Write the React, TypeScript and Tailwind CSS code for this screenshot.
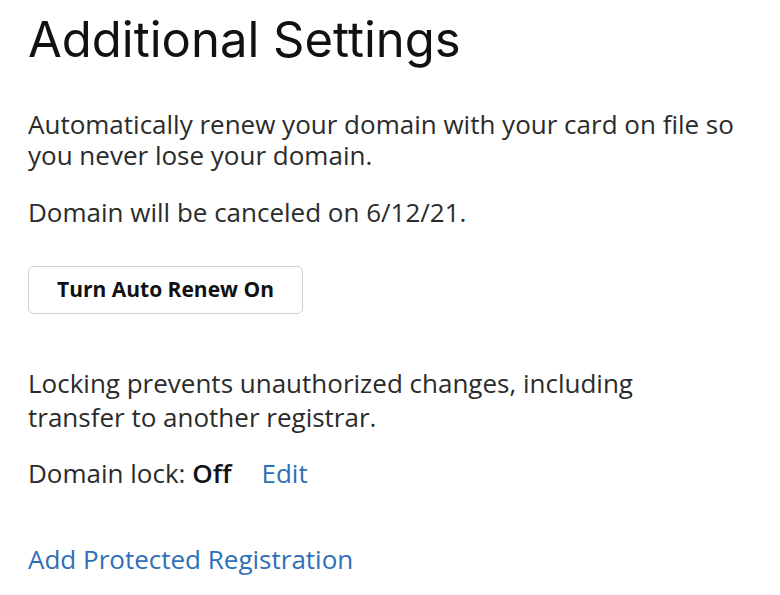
export default function App() {
  return (
    <div className="min-h-screen bg-white px-[28px] pt-[10px] text-[#1f1f1f]" style={{ fontFamily: "'Open Sans', 'Liberation Sans', sans-serif" }}>
      <h1 className="text-[49px] leading-[60px] font-normal text-[#111]" style={{ fontFamily: "Inter, 'Liberation Sans', sans-serif" }}>
        Additional Settings
      </h1>

      {/* Auto renew */}
      <div className="mt-[39px] text-[26px] leading-[31px] text-[#2b2b2b]">
        <p>Automatically renew your domain with your card on file so you never lose your domain.</p>
        <p className="mt-[26px]">Domain will be canceled on 6/12/21.</p>
      </div>
      <button className="mt-[38px] h-[48px] w-[275px] rounded-[6px] border border-[#cfcfcf] text-[21px] font-bold text-[#111]">
        Turn Auto Renew On
      </button>

      {/* Domain lock */}
      <div className="mt-[52px] text-[26px] leading-[34px] text-[#2b2b2b]">
        <p className="max-w-[680px]">Locking prevents unauthorized changes, including transfer to another registrar.</p>
        <p className="mt-[22px]">
          Domain lock: <span className="font-semibold text-[#111]">Off</span>
          <a className="ml-[30px] text-[#2f6fb8]">Edit</a>
        </p>
      </div>
      <a className="mt-[50px] block text-[26px] text-[#2f6fb8]">Add Protected Registration</a>
    </div>
  );
}
